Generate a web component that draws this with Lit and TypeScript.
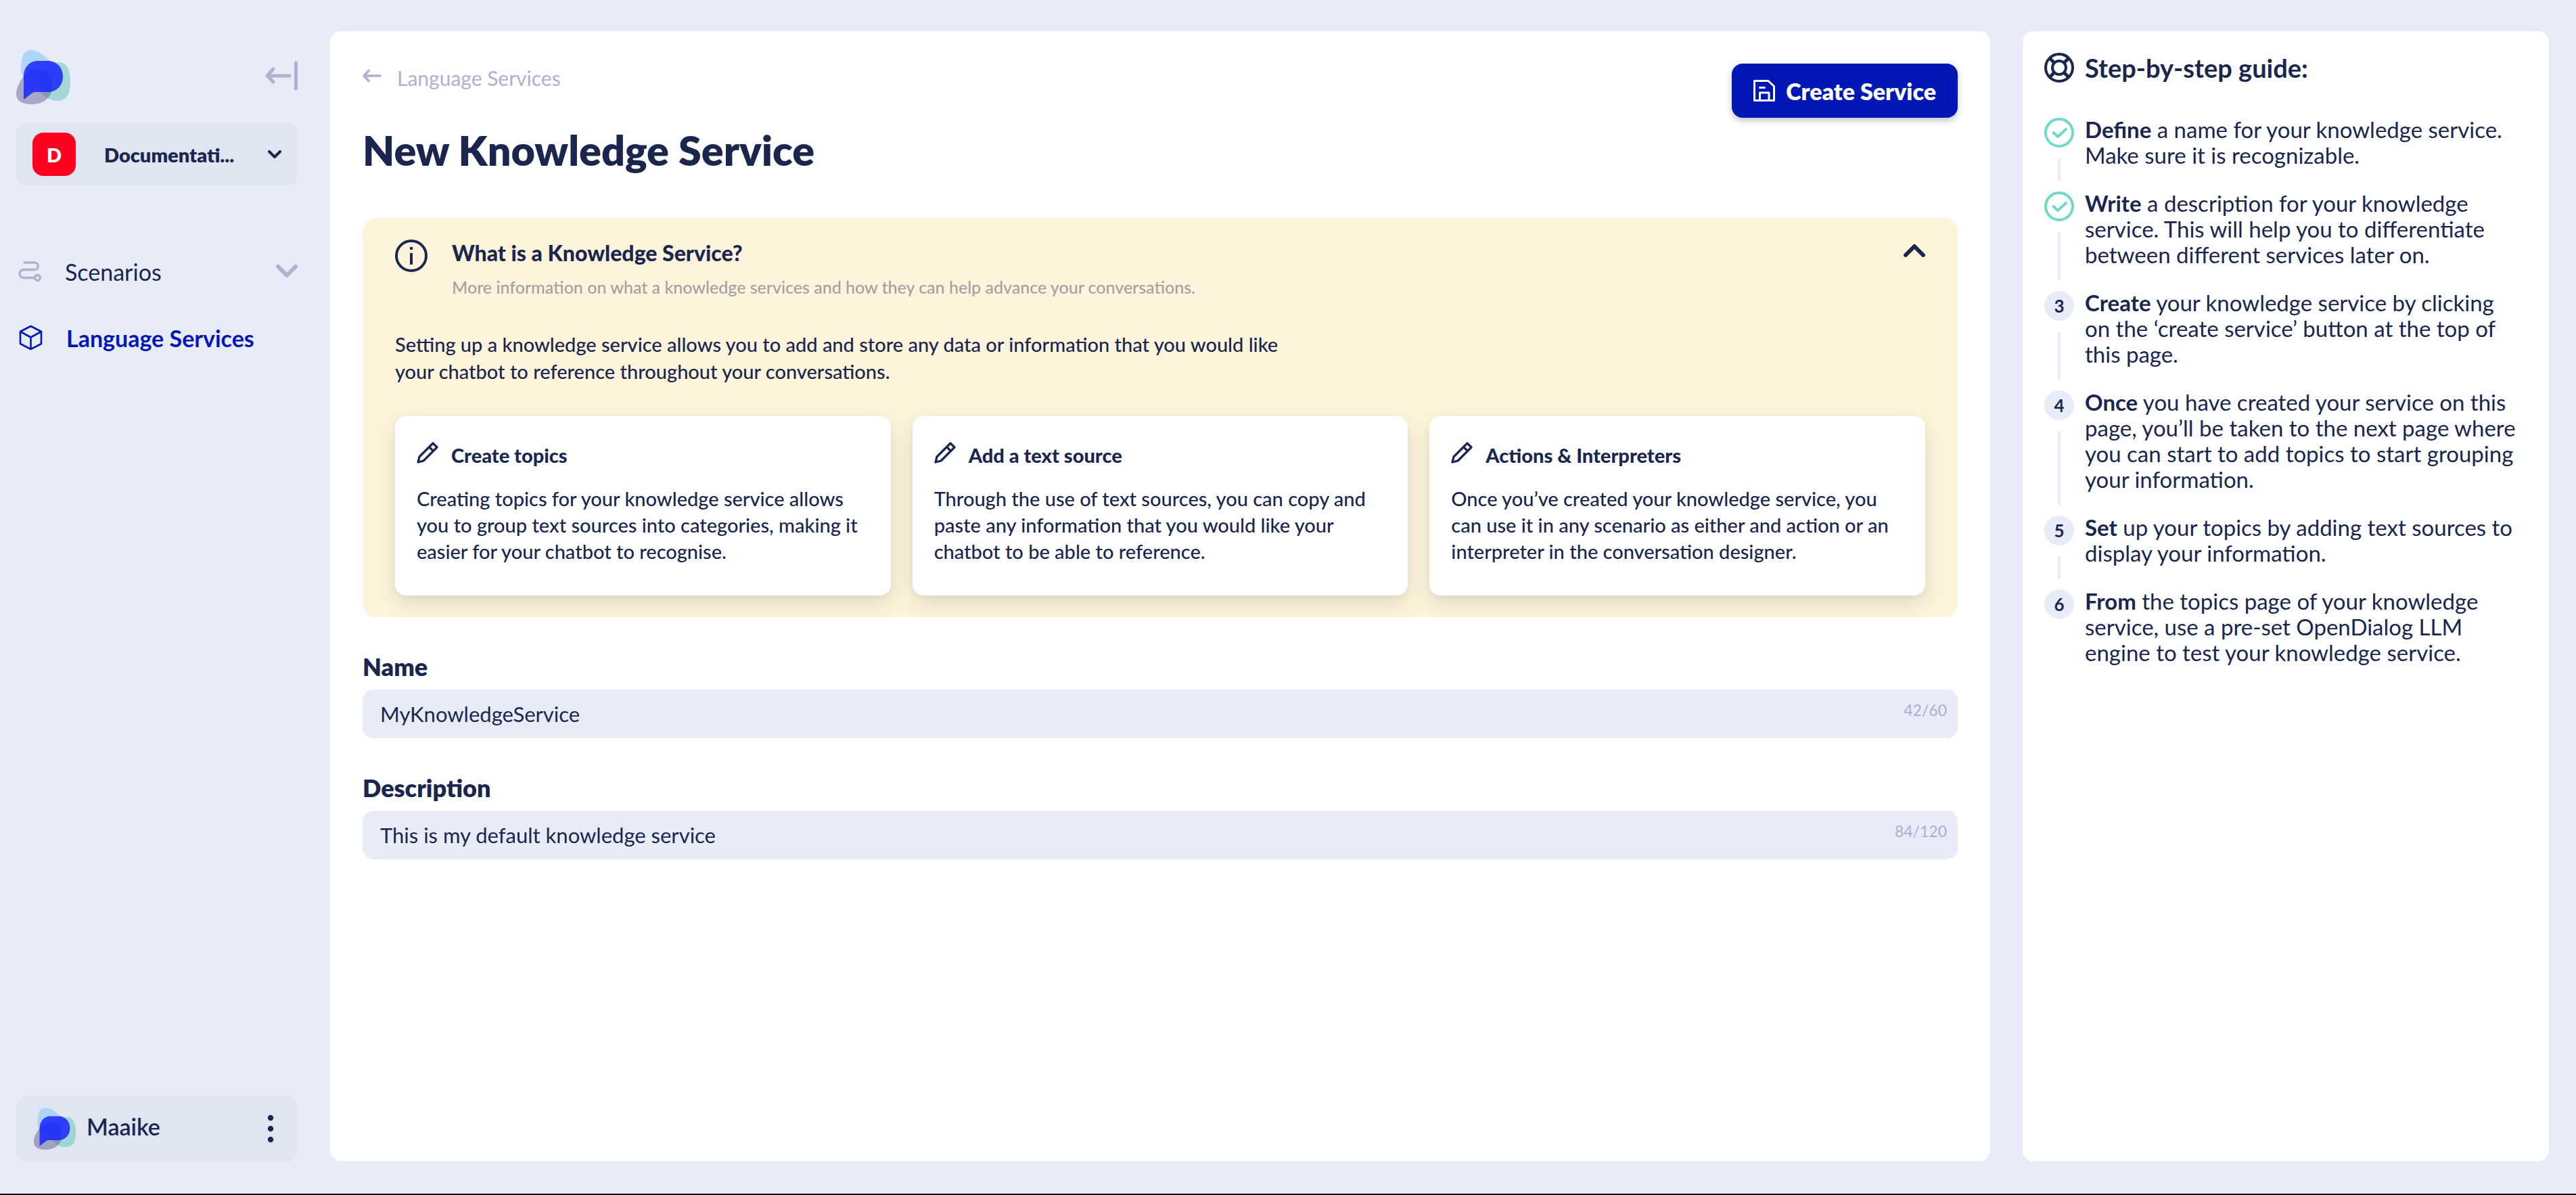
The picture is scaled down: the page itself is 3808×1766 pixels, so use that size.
import { LitElement, html, css, svg, nothing } from "lit";
import { customElement, state } from "lit/decorators.js";

const tokens = css`
  *, *::before, *::after { box-sizing: border-box; }
  h1, h2, h3, p, ul, ol { margin: 0; padding: 0; }
  ul, ol { list-style: none; }
  svg { display: block; flex: none; }
  button, input {
    font: inherit;
    color: inherit;
    border: 0;
    background: none;
    padding: 0;
    margin: 0;
  }
  button { cursor: pointer; }
  a { color: inherit; text-decoration: none; }
`;

const logo = (size: number) => html`
  <svg width=${size} height=${size} viewBox="0 0 80 80" aria-hidden="true">
    <path fill="#a9d1f8" fill-opacity=".88" d="M22 0C34 0 58 18 58 34C58 46 46 55 34 55C16 55 7 42 7 26C7 10 12 0 22 0Z" />
    <path fill="#75cbbf" fill-opacity=".6" d="M64 18C76 18 80 32 80 48C80 66 74 75 60 75C46 75 32 62 32 48C32 32 48 18 64 18Z" />
    <path fill="#4b3f80" fill-opacity=".4" d="M30 28C44 28 53 40 53 54C53 70 40 80 24 80C8 80 0 76 0 64C0 52 14 28 30 28Z" />
    <path fill="#1522ff" fill-opacity=".84" d="M11 40C11 26 19 16 32 16H47C60 16 69 26 69 39C69 52 60 62 47 62H28Q25 62 23 64L11 73Z" />
  </svg>
`;

const pencil = svg`
  <svg width="32" height="34" viewBox="0 -2 32 34" fill="none" stroke="currentColor" stroke-width="3.200" stroke-linejoin="round" aria-hidden="true">
    <path d="M2 30L4 22L24 2L30 8L10 28Z" />
    <path d="M18.500 7.500L24.500 13.500" />
  </svg>
`;

interface Card { title: string; text: string; }
interface Step { lead: string; text: string; done?: boolean; }

@customElement("side-nav")
class SideNav extends LitElement {
  static styles = [tokens, css`
    :host { display: flex; flex-direction: column; width: 416px; flex: none; }
    .top {
      display: flex;
      justify-content: space-between;
      align-items: flex-start;
      padding-top: 28px;
      color: #b3afcd;
    }
    .collapse { padding-top: 16px; }
    .workspace {
      display: flex;
      align-items: center;
      width: 100%;
      height: 92px;
      margin-top: 28px;
      padding: 0 24px;
      border-radius: 16px;
      background: #dfe5f1;
      font-size: 29px;
      font-weight: 800;
      text-align: left;
    }
    .badge {
      display: grid;
      place-items: center;
      width: 64px;
      height: 64px;
      border-radius: 16px;
      background: #ff0020;
      color: #fff;
    }
    .workspace-name { flex: 1; padding-left: 42px; }
    .links { display: grid; gap: 24px; margin-top: 90px; }
    .link {
      display: flex;
      align-items: center;
      width: 100%;
      height: 74px;
      font-size: 34px;
      text-align: left;
    }
    .link-text { flex: 1; padding-left: 32px; }
    .muted { color: #b3afcd; }
    .active { color: #0017b5; font-weight: 700; }
    .user {
      display: flex;
      align-items: center;
      height: 96px;
      margin-top: auto;
      padding: 0 26px;
      border-radius: 16px;
      background: #dfe5f1;
      font-size: 34px;
      font-weight: 600;
    }
    .user-name { flex: 1; padding: 0 0 8px 16px; }
    .more { padding: 8px; }
  `];

  render() {
    return html`
      <div class="top">
        ${logo(80)}
        <button class="collapse" aria-label="Collapse menu">
          <svg width="48" height="44" viewBox="0 0 48 44" fill="none" stroke="currentColor" stroke-width="5" stroke-linecap="round" stroke-linejoin="round">
            <path d="M36 22H3M12 12L3 22L12 31" /><path d="M45.500 3V41" />
          </svg>
        </button>
      </div>
      <button class="workspace">
        <span class="badge">D</span>
        <span class="workspace-name">Documentati...</span>
        <svg width="20" height="12" viewBox="0 0 20 12" fill="none" stroke="currentColor" stroke-width="4" stroke-linecap="round" stroke-linejoin="round"><path d="M2 2L10 10L18 2" /></svg>
      </button>
      <nav class="links">
        <button class="link">
          <svg class="muted" width="40" height="40" viewBox="0 0 40 40" fill="none" stroke="currentColor" stroke-width="3.400" stroke-linecap="round">
            <path d="M12 7H27A5 5 0 0 1 27 17.500H11A6 6 0 0 0 11 29.500H27" /><circle cx="31.500" cy="29.500" r="4" />
          </svg>
          <span class="link-text">Scenarios</span>
          <svg class="muted" width="32" height="20" viewBox="0 0 32 20" fill="none" stroke="currentColor" stroke-width="6" stroke-linecap="round" stroke-linejoin="round"><path d="M3 3L16 16L29 3" /></svg>
        </button>
        <a class="link active" href="#language-services" aria-current="page">
          <svg width="42" height="40" viewBox="0 0 42 40" fill="none" stroke="currentColor" stroke-width="2.600" stroke-linejoin="round">
            <path d="M21.500 3L37 11V29L21.500 37L6 29V11Z" /><path d="M6 11L21.500 19.500L37 11M21.500 19.500V37" />
          </svg>
          <span class="link-text">Language Services</span>
        </a>
      </nav>
      <div class="user">
        ${logo(62)}
        <span class="user-name">Maaike</span>
        <button class="more" aria-label="Account menu">
          <svg width="12" height="42" viewBox="0 0 12 42" fill="currentColor"><circle cx="6" cy="5" r="4.200" /><circle cx="6" cy="21" r="4.200" /><circle cx="6" cy="37" r="4.200" /></svg>
        </button>
      </div>
    `;
  }
}

@customElement("knowledge-info")
class KnowledgeInfo extends LitElement {
  @state() private open = true;

  private cards: Card[] = [
    { title: "Create topics", text: "Creating topics for your knowledge service allows you to group text sources into categories, making it easier for your chatbot to recognise." },
    { title: "Add a text source", text: "Through the use of text sources, you can copy and paste any information that you would like your chatbot to be able to reference." },
    { title: "Actions & Interpreters", text: "Once you’ve created your knowledge service, you can use it in any scenario as either and action or an interpreter in the conversation designer." },
  ];

  static styles = [tokens, css`
    :host {
      display: block;
      padding: 32px 48px;
      border-radius: 20px;
      background: #fef4dc;
      font-size: 29px;
      line-height: 39px;
      font-weight: 500;
    }
    .head { display: flex; align-items: flex-start; gap: 36px; }
    .titles { flex: 1; }
    .title { font-size: 32px; line-height: 40px; font-weight: 900; }
    .subtitle { margin-top: 10px; font-size: 25px; line-height: 40px; color: #a2a1a1; }
    .toggle { padding: 6px 0; }
    .intro { max-width: 1340px; margin-top: 45px; line-height: 40px; }
    .cards { display: grid; grid-template-columns: repeat(3, 1fr); gap: 32px; margin-top: 46px; }
    .card {
      padding: 36px 32px 46px;
      border-radius: 16px;
      background: #fff;
      box-shadow: 0 12px 32px rgb(0 0 0 / 11%), 0 4px 8px rgb(0 0 0 / 4%);
    }
    .card-title { display: flex; gap: 19px; font-size: 29px; line-height: 44px; font-weight: 900; }
    .card-text { margin-top: 22px; }
  `];

  render() {
    return html`
      <div class="head">
        <svg width="48" height="48" viewBox="0 0 48 48" fill="none" stroke="currentColor" aria-hidden="true">
          <circle cx="24" cy="24" r="22" stroke-width="4" /><path d="M24 20V37M24 11V15" stroke-width="4" />
        </svg>
        <div class="titles">
          <h2 class="title">What is a Knowledge Service?</h2>
          <p class="subtitle">More information on what a knowledge services and how they can help advance your conversations.</p>
        </div>
        <button class="toggle" aria-label="Toggle information" aria-expanded=${this.open} @click=${() => (this.open = !this.open)}>
          <svg width="32" height="20" viewBox="0 0 32 20" fill="none" stroke="currentColor" stroke-width="6" stroke-linecap="round" stroke-linejoin="round"><path d="M3 17L16 4L29 17" /></svg>
        </button>
      </div>
      ${this.open ? html`
        <p class="intro">Setting up a knowledge service allows you to add and store any data or information that you would like your chatbot to reference throughout your conversations.</p>
        <div class="cards">
          ${this.cards.map((card) => html`
            <article class="card">
              <h3 class="card-title">${pencil}${card.title}</h3>
              <p class="card-text">${card.text}</p>
            </article>
          `)}
        </div>
      ` : nothing}
    `;
  }
}

@customElement("step-guide")
class StepGuide extends LitElement {
  private steps: Step[] = [
    { lead: "Define", text: "a name for your knowledge service. Make sure it is recognizable.", done: true },
    { lead: "Write", text: "a description for your knowledge service. This will help you to differentiate between different services later on.", done: true },
    { lead: "Create", text: "your knowledge service by clicking on the ‘create service’ button at the top of this page." },
    { lead: "Once", text: "you have created your service on this page, you’ll be taken to the next page where you can start to add topics to start grouping your information." },
    { lead: "Set", text: "up your topics by adding text sources to display your information." },
    { lead: "From", text: "the topics page of your knowledge service, use a pre-set OpenDialog LLM engine to test your knowledge service." },
  ];

  static styles = [tokens, css`
    :host {
      display: block;
      width: 778px;
      flex: none;
      padding: 32px 40px 32px 32px;
      border-radius: 16px;
      background: #fff;
      font-size: 33px;
      line-height: 38px;
    }
    .title { display: flex; align-items: center; gap: 16px; font-size: 38px; line-height: 44px; font-weight: 700; }
    .steps { margin-top: 52px; }
    .step { display: flex; gap: 16px; }
    .rail { display: flex; flex-direction: column; align-items: center; }
    .rail::after { content: ""; flex: 1; width: 4px; margin: 16px 0; background: #e8ecf9; }
    .step:last-child .rail::after { content: none; }
    .number {
      display: grid;
      place-items: center;
      width: 44px;
      height: 44px;
      border-radius: 50%;
      background: #e8ecf9;
      font-size: 26px;
      font-weight: 700;
    }
    .text { margin-top: -2px; padding-bottom: 35px; }
  `];

  render() {
    return html`
      <h2 class="title">
        <svg width="44" height="44" viewBox="0 0 44 44" fill="none" stroke="currentColor" stroke-width="4" aria-hidden="true">
          <circle cx="22" cy="22" r="20" /><circle cx="22" cy="22" r="10" />
          <path d="M8 8L15 15M36 8L29 15M8 36L15 29M36 36L29 29" stroke-width="5" />
        </svg>
        Step-by-step guide:
      </h2>
      <ol class="steps">
        ${this.steps.map((step, index) => html`
          <li class="step">
            <div class="rail">
              ${step.done
                ? html`<svg width="44" height="44" viewBox="0 0 44 44" fill="none" stroke="#75d7c9" stroke-width="4" stroke-linecap="round" stroke-linejoin="round" role="img" aria-label="Done">
                    <circle cx="22" cy="22" r="20" /><path d="M13.500 22L20 28L32 17" />
                  </svg>`
                : html`<span class="number">${index + 1}</span>`}
            </div>
            <p class="text"><b>${step.lead}</b> ${step.text}</p>
          </li>
        `)}
      </ol>
    `;
  }
}

@customElement("counted-field")
class CountedField extends LitElement {
  static properties = { label: {}, value: {}, counter: {} };
  declare label: string;
  declare value: string;
  declare counter: string;

  static styles = [tokens, css`
    :host { display: block; }
    .label { display: block; font-size: 36px; line-height: 44px; font-weight: 800; }
    .box {
      display: flex;
      height: 72px;
      margin-top: 12px;
      padding: 0 16px 0 26px;
      border-radius: 16px;
      background: #e8ecf9;
    }
    .input { flex: 1; min-width: 0; font-size: 31px; outline: none; }
    .counter { padding-top: 14px; font-size: 23px; line-height: 32px; color: #aeadce; }
  `];

  render() {
    return html`
      <label class="label" for="field">${this.label}</label>
      <div class="box">
        <input class="input" id="field" type="text" .value=${this.value} />
        <span class="counter">${this.counter}</span>
      </div>
    `;
  }
}

@customElement("app-root")
class AppRoot extends LitElement {
  static styles = [tokens, css`
    :host {
      display: flex;
      gap: 48px;
      min-height: 100vh;
      padding: 46px 40px 48px 24px;
      box-sizing: border-box;
      border-bottom: 2px solid #000;
      background: #e8ecf9;
      color: #1a264d;
      font-family: Lato, "Liberation Sans", sans-serif;
    }
    .main { flex: 1; min-width: 0; padding: 48px; border-radius: 16px; background: #fff; }
    .header { display: flex; justify-content: space-between; align-items: flex-start; }
    .back { display: flex; align-items: flex-start; gap: 23px; font-size: 30px; line-height: 42px; color: #b3afcd; }
    .arrow { margin-top: 8px; }
    .heading { margin-top: 50px; font-size: 61px; line-height: 72px; font-weight: 800; }
    .create {
      display: flex;
      align-items: center;
      gap: 16px;
      height: 80px;
      padding: 0 32px;
      border-radius: 16px;
      background: #0017b5;
      color: #fff;
      font-size: 34px;
      font-weight: 800;
      box-shadow: 0 4px 10px rgb(26 38 77 / 28%);
    }
    .info { margin-top: 64px; }
    .field { margin-top: 51px; }
  `];

  render() {
    return html`
      <side-nav></side-nav>
      <main class="main">
        <div class="header">
          <div>
            <a class="back" href="#language-services">
              <svg class="arrow" width="28" height="20" viewBox="0 0 28 20" fill="none" stroke="currentColor" stroke-width="3.600" stroke-linecap="round" stroke-linejoin="round"><path d="M26 10H2M9 2.500L2 10L9 17.500" /></svg>
              Language Services
            </a>
            <h1 class="heading">New Knowledge Service</h1>
          </div>
          <button class="create">
            <svg width="32" height="32" viewBox="0 0 32 32" fill="none" stroke="currentColor" stroke-width="3" stroke-linejoin="round"><path d="M1.500 1.500H22L30.500 9.500V30.500H1.500Z" /><path d="M9.500 30V19H23V30M9.500 11.500H16.500" stroke-linecap="round" /></svg>
            Create Service
          </button>
        </div>
        <knowledge-info class="info"></knowledge-info>
        <counted-field class="field" label="Name" value="MyKnowledgeService" counter="42/60"></counted-field>
        <counted-field class="field" label="Description" value="This is my default knowledge service" counter="84/120"></counted-field>
      </main>
      <step-guide></step-guide>
    `;
  }
}
